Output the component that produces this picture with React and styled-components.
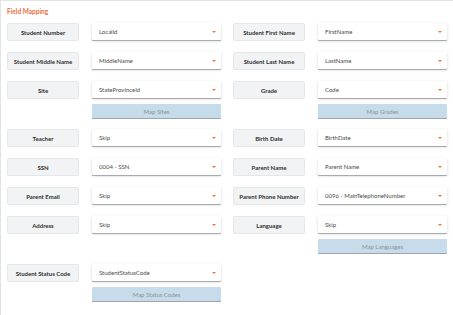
import React from 'react'
import styled, { createGlobalStyle } from 'styled-components'

const rows = [
  [
    { label: 'Student Number', value: 'LocalId' },
    { label: 'Student First Name', value: 'FirstName' },
  ],
  [
    { label: 'Student Middle Name', value: 'MiddleName' },
    { label: 'Student Last Name', value: 'LastName' },
  ],
  [
    { label: 'Site', value: 'StateProvinceId', action: 'Map Sites' },
    { label: 'Grade', value: 'Code', action: 'Map Grades' },
  ],
  [
    { label: 'Teacher', value: 'Skip' },
    { label: 'Birth Date', value: 'BirthDate' },
  ],
  [
    { label: 'SSN', value: '0004 - SSN' },
    { label: 'Parent Name', value: 'Parent Name' },
  ],
  [
    { label: 'Parent Email', value: 'Skip' },
    { label: 'Parent Phone Number', value: '0096 - MainTelephoneNumber' },
  ],
  [
    { label: 'Address', value: 'Skip' },
    { label: 'Language', value: 'Skip', action: 'Map Languages' },
  ],
  [{ label: 'Student Status Code', value: 'StudentStatusCode', action: 'Map Status Codes' }],
]

const Field = ({ label, value, action }) => (
  <Cell>
    <Label>{label}</Label>
    <Select>
      <span>{value}</span>
      <Caret />
    </Select>
    {action && <MapButton>{action}</MapButton>}
  </Cell>
)

const App = () => (
  <>
    <GlobalStyle />
    <Card>
      <Title>Field Mapping</Title>
      <Grid>
        {rows.flat().map(f => (
          <Field key={f.label} {...f} />
        ))}
      </Grid>
    </Card>
  </>
)

export default App

const GlobalStyle = createGlobalStyle`
  html, body {
    margin: 0;
    background: #fff;
    font-family: Lato, "Liberation Sans", sans-serif;
    overflow: hidden;
  }
`

const Card = styled.div`
  height: 315px;
  box-sizing: border-box;
  border-top: 1px solid #e2e3e5;
  border-left: 1px solid #e2e3e5;
  padding: 6px 5px 0 6px;
`

const Title = styled.div`
  color: #e9713c;
  font-size: 6.5px;
  font-weight: 700;
  height: 9px;
  line-height: 9px;
  margin-bottom: 7px;
`

const Grid = styled.div`
  display: grid;
  grid-template-columns: 214px 215px;
  column-gap: 12px;
  row-gap: 11px;
  align-items: start;
`

const Cell = styled.div`
  display: grid;
  grid-template-columns: 72px 129px;
  column-gap: 13px;
  row-gap: 5px;
`

const Label = styled.div`
  grid-column: 1;
  height: 18px;
  box-sizing: border-box;
  border: 1px solid #e6e7e9;
  border-radius: 2px;
  background: #f2f3f5;
  color: #2f2f2f;
  font-size: 6px;
  font-weight: 700;
  display: flex;
  align-items: center;
  justify-content: center;
  white-space: nowrap;
`

const Select = styled.div`
  grid-column: 2;
  height: 17px;
  box-sizing: border-box;
  background: #fff;
  border-radius: 1px;
  box-shadow: 0 1px 0 #a9aaad, 0 1px 3px rgba(0, 0, 0, 0.18);
  color: #4a4a4a;
  font-size: 6px;
  display: flex;
  align-items: center;
  justify-content: space-between;
  padding: 0 5px 0 7px;
`

const Caret = styled.i`
  width: 0;
  height: 0;
  border-left: 2px solid transparent;
  border-right: 2px solid transparent;
  border-top: 2.5px solid #f0733a;
`

const MapButton = styled.div`
  grid-column: 2;
  height: 14px;
  box-sizing: border-box;
  background: #c6dcea;
  border-radius: 1px;
  box-shadow: 0 1px 0 #9ea4aa;
  color: #8a9197;
  font-size: 6px;
  display: flex;
  align-items: center;
  justify-content: center;
`
